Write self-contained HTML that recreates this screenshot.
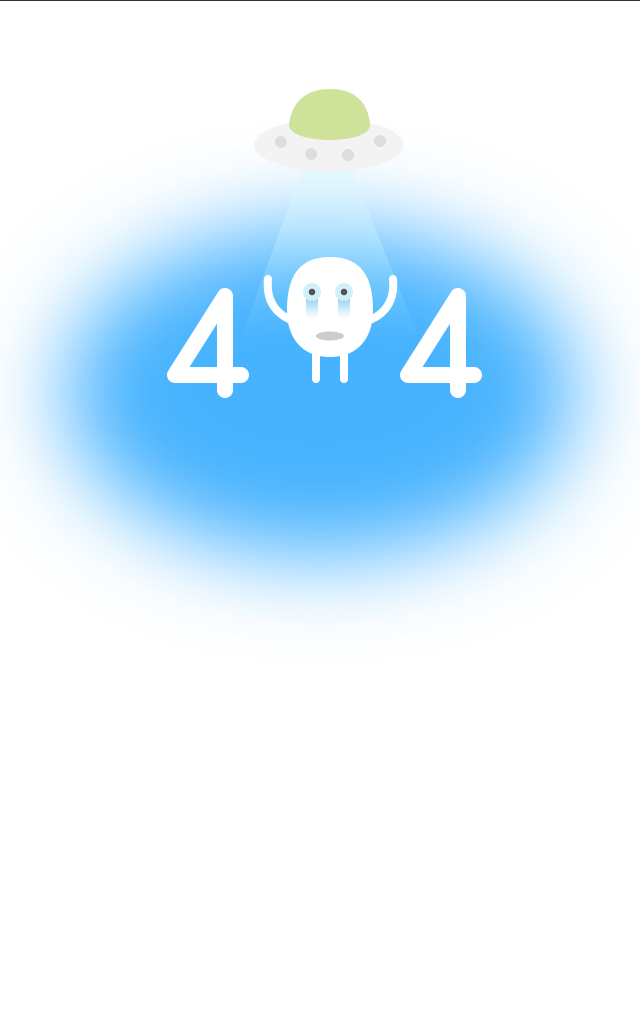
<!DOCTYPE html>
<html><head><meta charset="utf-8"><style>
html,body{margin:0;padding:0;background:#fff;width:640px;height:1009px;overflow:hidden}
.top{position:absolute;left:0;top:0;width:640px;height:1px;background:#333}
svg{position:absolute;left:0;top:0}
</style></head><body>
<svg width="640" height="1009" viewBox="0 0 640 1009">
<defs>
<filter id="b" x="-50%" y="-50%" width="200%" height="200%"><feGaussianBlur stdDeviation="45"/></filter>
<linearGradient id="beam" x1="0" y1="0" x2="0" y2="1">
<stop offset="0" stop-color="#e8f7ff" stop-opacity="0.9"/>
<stop offset="0.7" stop-color="#9be0ff" stop-opacity="0.25"/>
<stop offset="1" stop-color="#9be0ff" stop-opacity="0"/>
</linearGradient>
<linearGradient id="tear" x1="0" y1="0" x2="0" y2="1">
<stop offset="0" stop-color="#7cc8f4"/>
<stop offset="1" stop-color="#ffffff"/>
</linearGradient>
</defs>
<ellipse cx="320" cy="392" rx="255" ry="165" fill="#46b3fe" filter="url(#b)"/>
<polygon points="302,170 352,170 420,340 240,340" fill="url(#beam)"/>
<ellipse cx="329" cy="145" rx="75" ry="26" fill="#f3f3f3"/>
<path d="M289,125 C292,98 310,89 330,89 C350,89 368,98 370,125 C370,135 350,140 330,140 C310,140 289,135 289,125Z" fill="#cfe29a"/>
<circle cx="281" cy="142" r="6" fill="#ddd"/>
<circle cx="311" cy="154" r="6" fill="#ddd"/>
<circle cx="348" cy="155" r="6" fill="#ddd"/>
<circle cx="380" cy="141" r="6" fill="#ddd"/>
<g fill="none" stroke="#fff" stroke-width="8" stroke-linecap="round">
<path d="M268,279 C266,300 275,313 291,320"/>
<path d="M393,279 C395,300 386,313 370,320"/>
<path d="M316,355 L316,379"/>
<path d="M344,355 L344,379"/>
</g>
<path d="M330,257 C362,257 373,278 373,310 C373,338 358,357 330,357 C302,357 287,338 287,310 C287,278 298,257 330,257Z" fill="#fff"/>
<rect x="306" y="294" width="12" height="24" fill="url(#tear)"/>
<rect x="338" y="294" width="12" height="24" fill="url(#tear)"/>
<circle cx="312" cy="292" r="9" fill="#d2f0fc"/>
<circle cx="344" cy="292" r="9" fill="#d2f0fc"/>
<circle cx="312" cy="292" r="3.3" fill="#555"/>
<circle cx="344" cy="292" r="3.3" fill="#555"/>
<ellipse cx="330" cy="336" rx="14" ry="4.5" fill="#ccc"/>
<g fill="none" stroke="#fff" stroke-width="16" stroke-linecap="round" stroke-linejoin="round">
<path d="M225,390 L225,296 L175,375 L241,375"/>
<path d="M458,390 L458,296 L408,375 L474,375"/>
</g>
</svg>
<div class="top"></div>
</body></html>
